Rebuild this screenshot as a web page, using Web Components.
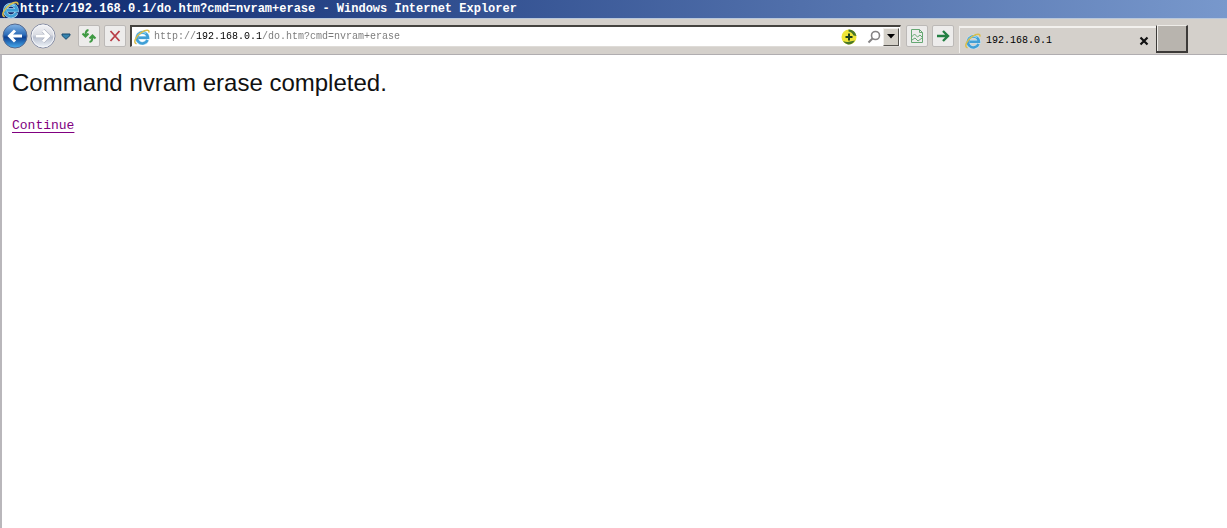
<!DOCTYPE html>
<html lang="en">
<head>
<meta charset="utf-8">
<title>http://192.168.0.1/do.htm?cmd=nvram+erase - Windows Internet Explorer</title>
<style>
  html, body { height: 100%; }
  body { margin: 0; background: #fff; font-family: "Liberation Mono", monospace; color: #000; }
</style>
</head>
<body>
<browser-window>
  <title-bar slot="title">http://192.168.0.1/do.htm?cmd=nvram+erase - Windows Internet Explorer</title-bar>
  <nav-bar slot="nav">
    <address-bar value="http://192.168.0.1/do.htm?cmd=nvram+erase"></address-bar>
    <tab-strip slot="tabs">192.168.0.1</tab-strip>
  </nav-bar>
  <result-page href="#continue">
    Command nvram erase completed.
    <span slot="link">Continue</span>
  </result-page>
</browser-window>

<script>
class Base extends HTMLElement {
  constructor() {
    super();
    this.attachShadow({ mode: 'open' }).innerHTML =
      '<style>:host,*{box-sizing:border-box}button{font:inherit;padding:0;margin:0;border:0;background:none;display:grid;place-items:center;flex:none}svg{display:block}</style>' + this.view();
  }
}

customElements.define('ie-logo', class extends Base {
  view() {
    return `<style>:host{display:block;flex:none;width:var(--logo,16px);height:var(--logo,16px)}svg{width:100%;height:100%}</style>
    <svg viewBox="0 0 16 16" fill="none" aria-hidden="true">
      <path d="M13.500 11A5.500 5.500 0 1 1 13.900 8.700H4.500" stroke="#c3e6f7" stroke-width="3.600"/>
      <path d="M13.500 11A5.500 5.500 0 1 1 13.900 8.700H4.500" stroke="#3f9fd6" stroke-width="2.600"/>
      <path d="M4 6A5.500 5.500 0 0 1 12 4.500" stroke="#8fd6f3" stroke-width="1.200"/>
      <path d="M2.600 14.800C-1.500 14 2 7 7.500 3.400C11.500 .8 15.800.4 14.800 3.600" stroke="#d9bd4c" stroke-width="1.500"/>
    </svg>`;
  }
});

customElements.define('browser-window', class extends Base {
  view() {
    return `<style>:host{display:flex;flex-direction:column;min-height:100vh}main{flex:1;border-left:2px solid #b9b7bb;background:#fff}</style>
    <slot name="title"></slot><slot name="nav"></slot><main><slot></slot></main>`;
  }
});

customElements.define('title-bar', class extends Base {
  view() {
    return `<style>:host{display:flex;align-items:center;gap:1px;height:18px;padding-left:2px;overflow:hidden;
      background:linear-gradient(90deg,#0d286e,#2f4d8e 35%,#7898cc);color:#fff;font-size:12px;font-weight:bold;line-height:18px;white-space:nowrap;--logo:17px}</style>
      <ie-logo></ie-logo><span><slot></slot></span>`;
  }
});

customElements.define('nav-bar', class extends Base {
  view() {
    return `<style>
      :host{display:flex;align-items:center;height:37px;padding:0 0 1px 2px;background:#d4d0cb;border-top:1px solid #b9c8dc;border-bottom:1px solid #b0adb0}
      .round{width:26px;height:26px}
      .drop{width:16px;height:22px;margin:0 4px 0 2px}
      .tool{width:22px;height:22px;background:#edeceb;border:1px solid #bcb9b7;border-radius:2px}
      .tool+.tool{margin-left:4px}
      .back{margin-right:2px}
      ::slotted(address-bar){flex:1 1 770px;min-width:0;margin:0 5px 0 4px}
      .tabs{flex:0 1 268px;margin-left:5px;align-self:stretch}
    </style>
    <button class="round back" aria-label="Back"><svg width="26" height="26" viewBox="0 0 26 26">
      <defs><linearGradient id="b" x2="0" y2="1"><stop stop-color="#86b6e6"/><stop offset=".45" stop-color="#2c6cb8"/><stop offset=".55" stop-color="#0c3f91"/><stop offset="1" stop-color="#48aef0"/></linearGradient></defs>
      <circle cx="13" cy="13" r="12" fill="url(#b)" stroke="#54688e"/>
      <path d="M20 13H8M13 7.500L7.500 13l5.500 5.500" fill="none" stroke="#fff" stroke-width="3"/></svg></button>
    <button class="round" aria-label="Forward"><svg width="26" height="26" viewBox="0 0 26 26">
      <defs><linearGradient id="f" x2="0" y2="1"><stop stop-color="#f5f5f8"/><stop offset=".45" stop-color="#dadce3"/><stop offset=".55" stop-color="#b8bfcf"/><stop offset="1" stop-color="#f3f8fc"/></linearGradient></defs>
      <circle cx="13" cy="13" r="12" fill="url(#f)" stroke="#858ca3"/><circle cx="13" cy="13" r="11" fill="none" stroke="#f6f7fa"/>
      <path d="M6 13h12M13 7.500l5.500 5.500-5.500 5.500" fill="none" stroke="#a9afbd" stroke-width="4"/>
      <path d="M6 13h12M13 7.500l5.500 5.500-5.500 5.500" fill="none" stroke="#fff" stroke-width="3"/></svg></button>
    <button class="drop" aria-label="Recent pages"><svg width="10" height="7" viewBox="0 0 10 7"><path d="M1 1h8v1.500L5 6.300 1 2.500z" fill="#3684ae" stroke="#17496f"/></svg></button>
    <button class="tool" aria-label="Refresh"><svg width="16" height="16" viewBox="0 0 16 16" fill="none" stroke="#3f9a43" stroke-width="2">
      <path d="M7.500 2Q4.500 2.500 4.500 7M1.500 5.500L4.500 8.500 7.500 5.500M8.500 14q3-.5 3-5M8.500 10.500L11.500 7.500l3 3"/></svg></button>
    <button class="tool" aria-label="Stop"><svg width="14" height="14" viewBox="0 0 14 14"><path d="M2.500 2l9 10M11.500 2l-9 10" stroke="#b93d46" stroke-width="1.800"/></svg></button>
    <slot></slot>
    <button class="tool" aria-label="Compatibility View"><svg width="14" height="16" viewBox="0 0 14 16" fill="none" stroke="#65a872">
      <path d="M1.500 1.500h8l3 3v10h-11zM9.500 1.500v3h3M1.500 9l3-3 3 3 2.500-2 2.500 2.500M2 12l3-2 3 3 4-3"/></svg></button>
    <button class="tool" aria-label="Go"><svg width="14" height="14" viewBox="0 0 14 14" fill="none" stroke="#248043" stroke-width="2.400"><path d="M1 7h11M7 2L12 7 7 12"/></svg></button>
    <div class="tabs"><slot name="tabs"></slot></div>`;
  }
});

customElements.define('address-bar', class extends Base {
  view() {
    return `<style>
      :host{display:flex;align-items:center;height:22px;background:#fff;border:1px solid #dedbd7;border-top:2px solid #45433f;border-left:2px solid #45433f;padding:0 1px 0 2px;gap:4px}
      input{flex:1;min-width:0;height:18px;padding:0;border:0;outline:0;font:10px/18px "Liberation Mono",monospace;color:transparent;
        background:linear-gradient(90deg,#777 7ch,#000 7ch 18ch,#777 18ch);-webkit-background-clip:text;background-clip:text}
      .find{width:18px;height:18px;margin:0 1px 0 3px}
      .menu{width:16px;height:18px;margin-left:-5px;background:#d4d0c8;border:1px solid;border-color:#f1efec #55534f #55534f #f1efec}
    </style>
    <ie-logo></ie-logo>
    <input type="text" aria-label="Address" spellcheck="false">
    <button aria-label="Add"><svg width="18" height="18" viewBox="0 0 18 18"><circle cx="9" cy="9" r="7.500" fill="#eee537"/>
      <path d="M8.500 1.500A7.500 7.500 0 0 1 16.500 8L13.500 7.500Q12 4 8.500 3.500zM3 13Q7 14.500 10 13.500L15 12.500Q12 17 8 16.500Q5 16 3 13z" fill="#49772a"/>
      <path d="M9 5.500v7M5.500 9h7" stroke="#1d401b" stroke-width="2"/></svg></button>
    <button class="find" aria-label="Search"><svg width="14" height="14" viewBox="0 0 14 14" fill="none" stroke="#858384"><circle cx="8.500" cy="5.500" r="4" stroke-width="1.600"/><path d="M5.500 8.500L1.500 12.500" stroke-width="2"/></svg></button>
    <button class="menu" aria-label="Show address list"><svg width="8" height="5" viewBox="0 0 8 5"><path d="M0 0h8L4 4.500z"/></svg></button>`;
  }
  connectedCallback() {
    this.shadowRoot.querySelector('input').value = this.getAttribute('value');
  }
});

customElements.define('tab-strip', class extends Base {
  view() {
    return `<style>
      :host{display:flex;height:100%;padding:7px 39px 0 0;font-size:10px;line-height:16px}
      .tab{flex:1;min-width:0;display:flex;align-items:center;gap:5px;padding:0 5px;border-left:1px solid #f0eeeb;border-top:2px solid #f3f1ee}
      .name{flex:1}
      .close{width:14px;height:16px}
      .new{width:32px;height:28px;align-self:flex-end;background:#b8b4ae;border:solid #3c3a38;border-width:1px 2px 2px 1px;border-top-color:#eeece8;box-shadow:inset 1px 0 #eeece8}
    </style>
    <div class="tab"><ie-logo></ie-logo><span class="name"><slot></slot></span>
      <button class="close" aria-label="Close tab"><svg width="10" height="10" viewBox="0 0 10 10"><path d="M1.500 1.500l7 7M8.500 1.500l-7 7" stroke="#111" stroke-width="2.200"/></svg></button></div>
    <button class="new" aria-label="New tab"></button>`;
  }
});

customElements.define('result-page', class extends Base {
  view() {
    return `<style>
      :host{display:block;padding:14px 10px}
      h1{margin:0 0 20px;font:24px/28px "Liberation Sans",Arial,sans-serif;color:#111}
      p{margin:0;font-size:13px;line-height:18px}
      a{color:#800080;text-underline-offset:3px}
    </style>
    <h1><slot></slot></h1><p><a><slot name="link"></slot></a></p>`;
  }
  connectedCallback() {
    this.shadowRoot.querySelector('a').href = this.getAttribute('href');
  }
});
</script>
</body>
</html>
